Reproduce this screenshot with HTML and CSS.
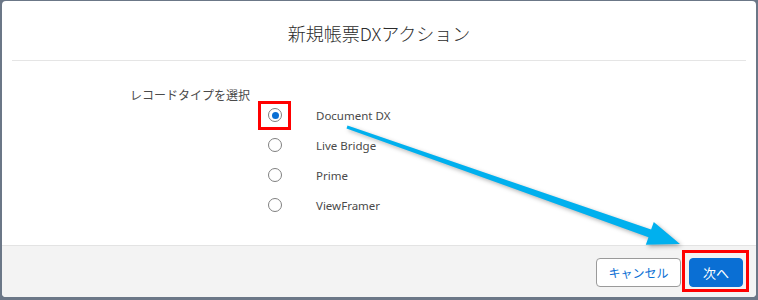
FILE: index.html
```html
<!DOCTYPE html>
<html lang="ja">
<head>
    <meta charset="UTF-8">
    <meta name="viewport" content="width=device-width, initial-scale=1.0">
    <title>新規帳票DXアクション</title>
    <link rel="stylesheet" href="styles.css">
</head>
<body>
    <div class="modal">
        <div class="modal-header">
            <h2>新規帳票DXアクション</h2>
        </div>
        <div class="modal-body">
            <div class="field-label">レコードタイプを選択</div>
            <ul class="radio-list">
                <li><span class="radio checked"></span><span class="radio-text">Document DX</span></li>
                <li><span class="radio"></span><span class="radio-text">Live Bridge</span></li>
                <li><span class="radio"></span><span class="radio-text">Prime</span></li>
                <li><span class="radio"></span><span class="radio-text">ViewFramer</span></li>
            </ul>
        </div>
        <div class="modal-footer">
            <button class="btn btn-neutral">キャンセル</button>
            <button class="btn btn-brand">次へ</button>
        </div>
    </div>

    <!-- 注釈: 赤枠と矢印 -->
    <svg class="annotation" width="758" height="300" viewBox="0 0 758 300">
        <rect x="259.5" y="102.5" width="30" height="26" fill="none" stroke="#ff0000" stroke-width="3"/>
        <rect x="683.5" y="251.5" width="64" height="39" fill="none" stroke="#ff0000" stroke-width="3"/>
        <polygon class="arrow" points="347.5,125.6 651.1,229.6 653.8,222.1 680,244 645.8,244.7 648.5,237.2 346.5,128.4"/>
    </svg>
</body>
</html>
```

FILE: styles.css
```css
body {
    margin: 0;
    width: 758px;
    height: 300px;
    background-color: #6b7787;
    font-family: "Noto Sans", "Noto Sans CJK JP", sans-serif;
    position: relative;
    overflow: hidden;
}
.modal {
    margin: 1px 2px 0 2px;
    width: 754px;
    height: 296px;
    background-color: #fff;
    border-radius: 4px;
    display: flex;
    flex-direction: column;
    overflow: hidden;
}
.modal-header {
    height: 59px;
    margin: 0 10px;
    border-bottom: 1px solid #e5e5e5;
    display: flex;
    align-items: center;
    justify-content: center;
}
.modal-header h2 {
    margin: 0;
    padding-top: 4px;
    font-family: "Noto Sans CJK JP", sans-serif;
    font-weight: 300;
    font-size: 18px;
    color: #2b2b2b;
}
.modal-body {
    flex: 1;
    padding: 26px 0 0 128px;
}
.field-label {
    font-family: "Noto Sans CJK JP", sans-serif;
    font-size: 12px;
    line-height: 16px;
    color: #4a4a4a;
}
.radio-list {
    list-style: none;
    margin: -3px 0 0 138px;
    padding: 0;
}
.radio-list li {
    height: 30px;
    display: flex;
    align-items: center;
}
.radio {
    width: 12px;
    height: 12px;
    border: 1px solid #808080;
    border-radius: 50%;
    position: relative;
}
.radio.checked::after {
    content: "";
    position: absolute;
    left: 2.5px;
    top: 2.5px;
    width: 7px;
    height: 7px;
    border-radius: 50%;
    background-color: #0a6fd4;
}
.radio-text {
    margin-left: 34px;
    font-size: 11.5px;
    color: #4a4a4a;
}
.modal-footer {
    height: 50px;
    border-top: 1px solid #e3e3e3;
    background-color: #f3f3f3;
    display: flex;
    justify-content: flex-end;
    align-items: center;
    gap: 8px;
    padding: 1px 13px 0 0;
}
.btn {
    height: 29px;
    border-radius: 4px;
    font-family: "Noto Sans CJK JP", sans-serif;
    font-size: 12px;
    cursor: pointer;
}
.btn-neutral {
    width: 85px;
    background-color: #fff;
    border: 1px solid #9a9a9a;
    color: #0a6fd4;
}
.btn-brand {
    width: 54px;
    background-color: #0a6fd4;
    border: 1px solid #0a6fd4;
    color: #fff;
    font-size: 13px;
}
.annotation {
    position: absolute;
    left: 0;
    top: 0;
    pointer-events: none;
}
.arrow {
    fill: #00b0ee;
    filter: drop-shadow(2px 2px 2px rgba(0, 0, 0, 0.3));
}
```
